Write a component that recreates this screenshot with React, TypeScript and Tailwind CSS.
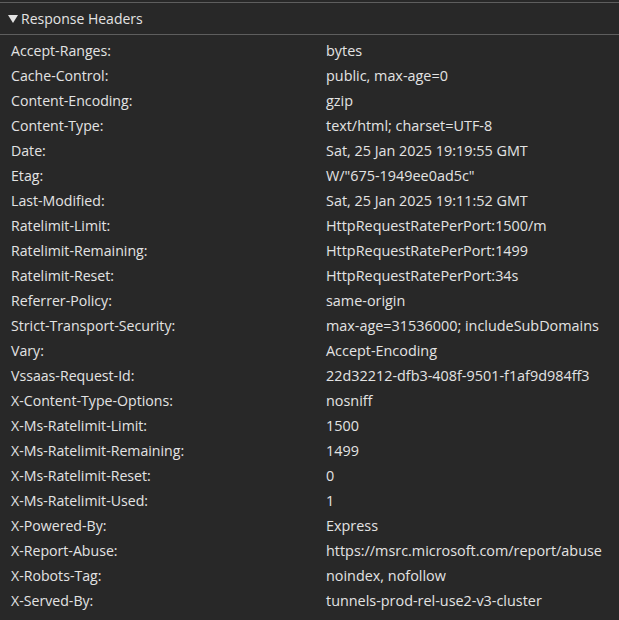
import React from 'react';

const headers: [string, string][] = [
  ['Accept-Ranges:', 'bytes'],
  ['Cache-Control:', 'public, max-age=0'],
  ['Content-Encoding:', 'gzip'],
  ['Content-Type:', 'text/html; charset=UTF-8'],
  ['Date:', 'Sat, 25 Jan 2025 19:19:55 GMT'],
  ['Etag:', 'W/"675-1949ee0ad5c"'],
  ['Last-Modified:', 'Sat, 25 Jan 2025 19:11:52 GMT'],
  ['Ratelimit-Limit:', 'HttpRequestRatePerPort:1500/m'],
  ['Ratelimit-Remaining:', 'HttpRequestRatePerPort:1499'],
  ['Ratelimit-Reset:', 'HttpRequestRatePerPort:34s'],
  ['Referrer-Policy:', 'same-origin'],
  ['Strict-Transport-Security:', 'max-age=31536000; includeSubDomains'],
  ['Vary:', 'Accept-Encoding'],
  ['Vssaas-Request-Id:', '22d32212-dfb3-408f-9501-f1af9d984ff3'],
  ['X-Content-Type-Options:', 'nosniff'],
  ['X-Ms-Ratelimit-Limit:', '1500'],
  ['X-Ms-Ratelimit-Remaining:', '1499'],
  ['X-Ms-Ratelimit-Reset:', '0'],
  ['X-Ms-Ratelimit-Used:', '1'],
  ['X-Powered-By:', 'Express'],
  ['X-Report-Abuse:', 'https://msrc.microsoft.com/report/abuse'],
  ['X-Robots-Tag:', 'noindex, nofollow'],
  ['X-Served-By:', 'tunnels-prod-rel-use2-v3-cluster'],
];

export default function App() {
  return (
    <div className="w-[619px] h-[620px] bg-[#282828] pt-[2px] text-[#e3e3e3] text-[14px] font-['Open_Sans','Liberation_Sans',sans-serif] overflow-hidden">
      <div className="border-t border-b border-[#5e5e5e] h-[33px] flex items-center pl-[8px]">
        {/* disclosure triangle */}
        <svg width="10" height="8" viewBox="0 0 10 8" className="mr-[3px]">
          <path d="M0 0 H10 L5 8 Z" fill="#e3e3e3" />
        </svg>
        <span>Response Headers</span>
      </div>
      <div className="pt-[3px]">
        {headers.map(([name, value]) => (
          <div key={name} className="flex h-[25px] items-center">
            <div className="w-[326px] pl-[11px] shrink-0 text-[14.15px]">{name}</div>
            <div className="whitespace-nowrap text-[14.4px]">{value}</div>
          </div>
        ))}
      </div>
    </div>
  );
}
